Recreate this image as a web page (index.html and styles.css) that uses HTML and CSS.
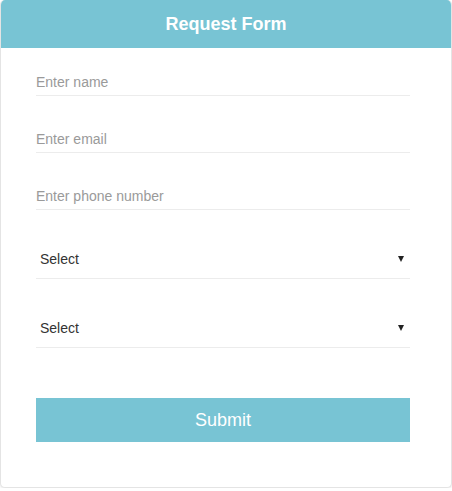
FILE: index.html
```html
<!DOCTYPE html>
<html>
<head>
<meta charset="utf-8">
<link rel="stylesheet" href="styles.css">
</head>
<body>
<div class="card">
  <div class="card-header">Request Form</div>
  <form class="form">
    <input class="field" type="text" placeholder="Enter name">
    <input class="field" type="email" placeholder="Enter email">
    <input class="field" type="tel" placeholder="Enter phone number">
    <div class="select-wrap">
      <select class="select"><option>Select</option></select>
    </div>
    <div class="select-wrap">
      <select class="select"><option>Select</option></select>
    </div>
    <button class="submit" type="button">Submit</button>
  </form>
</div>
</body>
</html>
```

FILE: styles.css
```css
html, body {
  margin: 0;
  padding: 0;
  background: #ffffff;
}
body {
  font-family: "Liberation Sans", Arial, sans-serif;
}
.card {
  width: 452px;
  box-sizing: border-box;
  border: 1px solid #e4e4e4;
  border-top: none;
  border-radius: 5px;
  box-shadow: 0 1px 3px rgba(0, 0, 0, 0.1);
  overflow: hidden;
  background: #fff;
}
.card-header {
  height: 48px;
  background: #78c4d4;
  color: #fff;
  font-weight: bold;
  font-size: 18px;
  line-height: 48px;
  text-align: center;
}
.form {
  display: flex;
  flex-direction: column;
  gap: 29px;
  padding: 20px 41px 45px 35px;
}
.field {
  height: 28px;
  box-sizing: border-box;
  border: none;
  border-bottom: 1px solid #ececec;
  padding: 0;
  margin: 0;
  font-family: "Liberation Sans", Arial, sans-serif;
  font-size: 14px;
  color: #333;
  outline: none;
  background: transparent;
}
.field::placeholder {
  color: #9a9a9a;
}
.select-wrap {
  position: relative;
}
.select-wrap::after {
  content: "";
  position: absolute;
  right: 6px;
  top: 17px;
  border-left: 3px solid transparent;
  border-right: 3px solid transparent;
  border-top: 6px solid #222;
}
.select {
  display: block;
  width: 100%;
  height: 40px;
  box-sizing: border-box;
  appearance: none;
  -webkit-appearance: none;
  border: none;
  border-bottom: 1px solid #ececec;
  border-radius: 0;
  background: transparent;
  padding: 0 0 0 4px;
  margin: 0;
  font-family: "Liberation Sans", Arial, sans-serif;
  font-size: 14px;
  color: #333;
  outline: none;
}
.submit {
  margin-top: 21px;
  height: 44px;
  border: none;
  background: #78c4d4;
  color: #fff;
  font-family: "Liberation Sans", Arial, sans-serif;
  font-size: 18px;
  padding: 0;
}
```
